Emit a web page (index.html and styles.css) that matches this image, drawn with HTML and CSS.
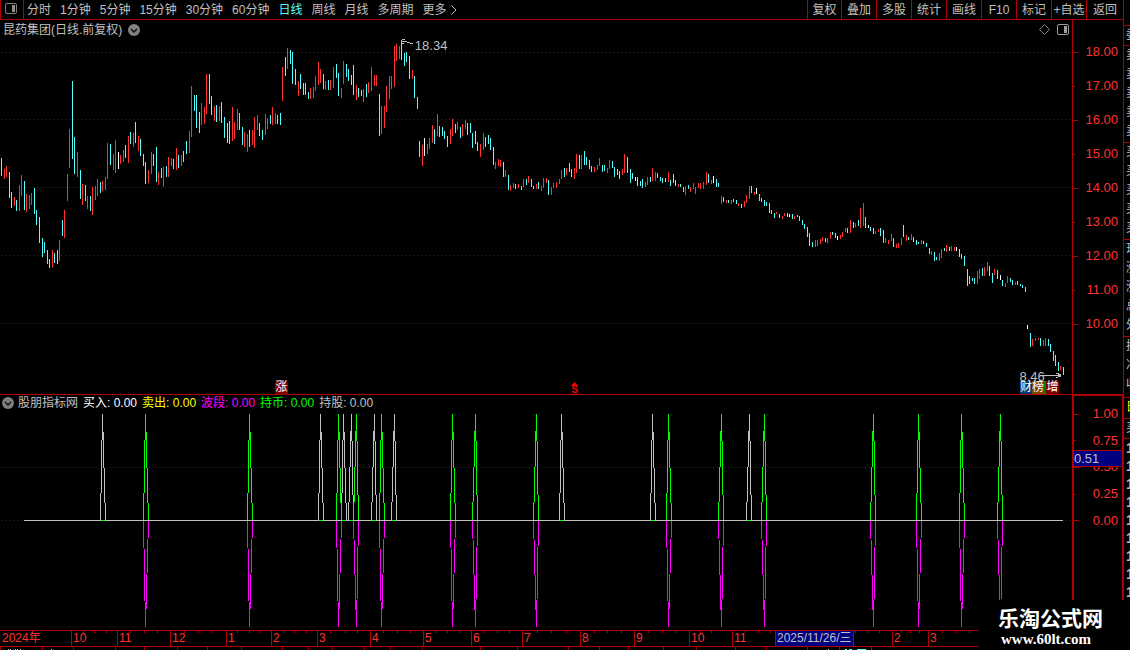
FILE: index.html
```html
<!DOCTYPE html>
<html lang="zh-CN">
<head>
<meta charset="utf-8">
<title>昆药集团 日线</title>
<link rel="stylesheet" href="styles.css">
</head>
<body>
<div class="terminal">
  <main class="main">
    <nav class="toolbar">
      <button class="panel-toggle" aria-label="侧栏"><svg class="icon" width="12" height="11" viewBox="0 0 12 11"><rect x=".5" y=".5" width="11" height="10" rx="1.5" fill="none" stroke="#808080"/><path d="M7 2h3v7H7z" fill="#909090"/></svg></button>
      <div class="periods">
        <button>分时</button><button>1分钟</button><button>5分钟</button><button>15分钟</button><button>30分钟</button><button>60分钟</button><button class="active">日线</button><button>周线</button><button>月线</button><button>多周期</button><button class="more">更多<svg width="6" height="10" viewBox="0 0 6 10"><path d="M.5 .5L5 5L.5 9.500" fill="none" stroke="#c0c0c0"/></svg></button>
      </div>
      <div class="tools">
        <button>复权</button><button>叠加</button><button>多股</button><button>统计</button><button>画线</button><button>F10</button><button>标记</button><button>+自选</button><button>返回</button>
      </div>
    </nav>

    <section class="pane price">
      <div class="plot">
        <header class="title">
          <h1>昆药集团(日线.前复权)</h1>
          <button class="drop" aria-label="展开"><svg width="12" height="12" viewBox="0 0 12 12"><circle cx="6" cy="6" r="6" fill="#808080"/><path d="M3 5l3 3l3-3" fill="none" stroke="#111" stroke-width="1.500"/></svg></button>
          <div class="title-tools">
            <svg width="11" height="11" viewBox="0 0 11 11"><path d="M5.500 .5L10.500 5.500L5.500 10.500L.5 5.500z" fill="none" stroke="#808080"/></svg>
            <svg width="12" height="11" viewBox="0 0 12 11"><rect x=".5" y=".5" width="11" height="10" rx="1.500" fill="none" stroke="#a0a0a0"/><path d="M7 2h3v7H7z" fill="#a0a0a0"/></svg>
          </div>
        </header>
        <svg class="chart" viewBox="0 38 1072 356" preserveAspectRatio="none">
          <path class="grid bright" d="M1 52.500H1072"/>
          <path class="grid" d="M1 119.500H1072M1 187.500H1072M1 255.500H1072M1 323.500H1072"/>
          <g transform="translate(.5 0)">
          <path class="down" d="M1 158V176M9 172V198M11 192V208M16 200V211M24 181V210M34 188V214M36 210V225M39 217V243M42 238V257M44 242V253M47 250V264M49 259V268M54 253V263M57 250V264M62 220V236M72 81V159M74 137V174M80 170V199M85 185V201M90 196V211M100 182V193M110 144V165M125 145V158M130 132V144M135 122V143M140 139V156M143 154V166M145 162V184M153 154V166M156 147V182M161 168V178M166 166V177M173 159V169M178 155V168M183 151V162M186 141V154M194 95V111M196 95V128M199 112V133M209 74V104M211 96V115M216 105V122M221 102V123M224 117V138M227 123V143M229 121V144M239 113V130M242 127V145M249 130V147M259 123V136M262 130V140M270 115V124M277 115V124M280 113V125M285 57V76M290 50V64M292 52V84M295 69V85M300 74V89M303 83V95M305 83V95M308 92V99M323 74V89M328 80V90M336 64V78M338 73V96M346 64V77M348 69V81M351 75V85M353 65V95M358 88V97M361 90V96M366 84V97M379 94V136M401 41V60M404 53V66M406 52V62M409 56V79M414 76V98M417 97V109M419 141V157M434 129V144M439 126V137M442 127V136M444 131V139M447 136V147M455 124V133M460 127V138M467 123V135M470 123V133M472 133V148M475 131V144M477 142V151M485 137V147M488 135V144M490 138V150M493 147V165M503 162V177M508 175V190M515 184V189M521 186V190M526 179V185M531 179V187M533 186V189M538 182V189M548 180V195M564 168V177M569 163V172M571 169V177M579 155V169M584 151V165M586 157V165M589 160V169M591 166V172M602 165V172M604 165V171M612 161V168M614 167V177M617 169V175M619 171V179M627 157V173M630 169V183M632 173V179M637 177V186M640 181V186M642 179V188M650 177V182M657 173V178M660 177V181M662 178V183M665 178V182M670 180V186M673 174V183M675 180V186M680 184V187M683 187V192M688 185V189M708 174V183M716 179V187M718 183V187M723 197V202M728 200V203M733 199V202M736 200V204M741 204V208M751 186V193M759 194V201M761 198V202M764 200V206M766 202V206M769 203V213M771 210V214M774 213V218M779 214V218M787 213V217M792 214V219M797 215V217M799 216V221M802 220V225M804 224V229M807 227V237M809 233V246M812 242V247M825 238V242M832 232V235M835 233V238M847 228V233M853 222V228M858 220V226M865 217V228M870 227V231M873 228V234M880 228V236M883 230V243M893 238V247M903 225V237M908 237V240M913 237V242M916 240V245M918 242V244M923 241V244M926 243V247M929 248V254M934 252V261M936 257V260M944 248V251M949 247V251M959 249V257M961 254V259M964 256V266M967 269V286M969 276V284M972 278V281M974 278V284M982 268V276M989 266V276M992 273V283M997 270V279M1002 280V286M1010 278V282M1012 280V285M1017 281V285M1020 284V286M1022 285V288M1025 287V292M1030 333V347M1040 338V346M1048 339V346M1050 344V352M1053 351V361M1055 355V366M1058 362V371M1063 367V375"/>
          <path class="up" d="M4 169V179M6 166V177M14 197V206M19 185V211M21 175V196M26 194V212M29 195V209M31 193V205M52 250V267M59 240V261M64 210V238M67 174V201M69 129V168M77 152V177M82 184V205M87 196V209M92 187V215M95 186V200M97 179V196M102 181V191M105 177V190M107 143V179M113 154V170M115 140V173M120 155V164M123 150V162M128 136V163M133 133V147M138 136V151M148 170V183M151 152V174M158 172V185M163 167V187M168 157V177M171 158V166M176 148V170M181 155V166M189 131V153M191 86V137M201 103V125M204 107V124M206 74V114M214 106V121M219 106V121M232 107V141M234 122V139M237 109V130M244 132V147M247 134V152M252 130V145M254 117V148M257 115V130M265 114V135M267 118V129M272 107V125M275 113V124M282 67V101M287 48V69M298 81V96M310 88V99M313 87V98M315 76V91M318 62V85M320 69V83M325 81V90M330 80V90M333 67V88M341 88V98M343 61V84M356 85V100M363 89V102M368 82V93M371 67V91M374 75V86M376 75V86M381 106V134M384 106V128M386 86V112M389 76V99M391 76V89M394 46V87M396 44V61M399 46V59M412 70V79M422 145V166M427 144V154M429 138V149M432 125V143M437 114V136M450 129V144M452 119V136M457 122V130M462 124V136M465 120V129M480 144V157M483 133V150M495 162V169M498 159V166M500 160V167M505 170V177M510 185V191M513 183V188M518 184V188M523 179V187M528 176V183M536 184V189M541 186V191M543 178V188M546 178V183M551 187V195M553 183V188M556 182V188M559 179V184M561 170V179M566 168V175M574 168V179M576 154V173M581 155V169M594 167V172M597 165V170M599 158V166M607 168V173M609 160V169M622 169V175M624 154V173M645 182V187M647 177V185M652 168V181M655 172V181M668 172V182M678 184V187M685 186V195M690 187V192M693 183V189M695 187V194M698 183V188M700 183V189M703 182V189M706 172V185M711 180V184M721 196V204M726 200V203M731 200V204M738 203V206M744 201V207M746 195V203M749 186V199M754 192V195M776 212V214M782 216V219M784 213V216M794 216V219M815 240V247M817 240V246M820 239V244M822 237V241M827 238V243M830 232V239M840 235V239M842 232V237M845 228V232M850 220V233M855 223V227M860 208V228M863 203V226M875 231V234M878 229V232M885 238V243M888 240V244M891 234V241M896 244V248M898 243V248M901 238V245M906 235V241M911 234V240M921 240V244M931 251V255M939 253V261M941 249V258M946 245V252M951 246V251M954 247V251M977 271V284M979 269V279M984 267V276M987 262V271M994 269V275M1005 283V287M1007 276V283M1015 282V285M1032 339V346M1035 338V341M1038 338V340M1043 340V346M1045 338V346M1060 366V370"/>
          <path class="flat" d="M118 152V169M424 138V156M635 177V181M713 176V183M756 188V194M789 214V217M837 236V240M868 225V228M956 247V251M1000 275V280M1027 325V329"/>
          </g>
          <path class="pointer" d="M401.500 44V40.500H402M402 39.500H405M401 41.500H405M405 41.500H407M407 42.500H410M410 43.500H413M402 43.500H404M1040 375.500H1061M1056 373.500H1059M1058 374.500H1061M1058 376.500H1061M1056 377.500H1058"/>
        </svg>
        <span class="mark high">18.34</span>
        <span class="mark low">8.46</span>
        <span class="badge rise">涨</span>
        <span class="dividend"><svg width="7" height="4" viewBox="0 0 7 4"><path d="M3.500 0L7 4H0z" fill="#f00"/></svg><u>S</u></span>
        <div class="badges"><span class="badge blue">财</span><span class="badge brown">榜</span><span class="badge red">增</span></div>
      </div>
      <ol class="axis price-axis">
        <li>18.00</li><li>17.00</li><li>16.00</li><li>15.00</li><li>14.00</li><li>13.00</li><li>12.00</li><li>11.00</li><li>10.00</li>
      </ol>
    </section>

    <section class="pane indicator">
      <div class="plot">
        <header class="legend">
          <button class="drop" aria-label="展开"><svg width="12" height="12" viewBox="0 0 12 12"><circle cx="6" cy="6" r="6" fill="#808080"/><path d="M3 5l3 3l3-3" fill="none" stroke="#111" stroke-width="1.500"/></svg></button>
          <span>股朋指标网</span><span class="buy">买入: 0.00</span><span class="sell">卖出: 0.00</span><span class="band">波段: 0.00</span><span class="cash">持币: 0.00</span><span>持股: 0.00</span>
        </header>
        <svg class="chart" viewBox="0 414 1072 216" preserveAspectRatio="none">
          <path class="grid" d="M1 467.500H1072M1 520.500H1072"/>
          <g transform="translate(.5 0)">
          <path class="hold" d="M100 520L102 414L105 520M318 520L320 414L323 520M341 520L343 414L346 520M348 520L351 414L353 520M371 520L374 414L376 520M391 520L394 414L396 520M559 520L561 414L564 520M650 520L652 414L655 520M746 520L749 414L751 520"/>
          <path class="long" d="M143 520L145 414L148 520M247 520L249 414L252 520M336 520L338 414L341 520M353 520L356 414L358 520M379 520L381 414L384 520M450 520L452 414L455 520M472 520L475 414L477 520M533 520L536 414L538 520M666 520L668 414L671 520M718 520L721 414L723 520M761 520L764 414L766 520M870 520L873 414L875 520M916 520L918 414L921 520M959 520L961 414L964 520M997 520L1000 414L1002 520"/>
          <path class="wave" d="M143 521L145 627L148 521M247 521L249 627L252 521M336 521L338 627L341 521M353 521L356 627L358 521M379 521L381 627L384 521M450 521L452 627L455 521M472 521L475 627L477 521M533 521L536 627L538 521M666 521L668 627L671 521M718 521L721 627L723 521M761 521L764 627L766 521M870 521L873 627L875 521M916 521L918 627L921 521M959 521L961 627L964 521M997 521L1000 627L1002 521"/>
          </g>
          <path class="hold" d="M24 520.500H1063"/>
          <path class="long" d="M101 520.500h4M319 520.500h4M342 520.500h4M349 520.500h4M372 520.500h4M392 520.500h4M560 520.500h4M651 520.500h4M747 520.500h4"/>
        </svg>
      </div>
      <div class="axis-box">
        <ol class="axis value-axis">
          <li>1.00</li><li>0.75</li><li>0.50</li><li>0.25</li><li>0.00</li>
        </ol>
        <output class="cursor-value">0.51</output>
      </div>
    </section>

    <footer class="dates">
      <svg class="ticks" viewBox="0 0 1123 15" preserveAspectRatio="none"><path d="M83.500 0v2M94.500 0v2M106.500 0v2M130.500 0v2M144.500 0v2M157.500 0v2M184.500 0v2M198.500 0v2M212.500 0v2M237.500 0v2M249.500 0v2M260.500 0v2M283.500 0v2M294.500 0v2M306.500 0v2M330.500 0v2M345.500 0v2M357.500 0v2M383.500 0v2M397.500 0v2M410.500 0v2M435.500 0v2M447.500 0v2M459.500 0v2M484.500 0v2M497.500 0v2M509.500 0v2M537.500 0v2M551.500 0v2M566.500 0v2M594.500 0v2M607.500 0v2M621.500 0v2M648.500 0v2M662.500 0v2M675.500 0v2M700.500 0v2M711.500 0v2M745.500 0v2M758.500 0v2M770.500 0v2M855.500 0v2M867.500 0v2M879.500 0v2M901.500 0v2M910.500 0v2M919.500 0v2M942.500 0v2M956.500 0v2M969.500 0v2"/></svg>
      <ol class="months">
        <li>2024年</li><li>10</li><li>11</li><li>12</li><li>1</li><li>2</li><li>3</li><li>4</li><li>5</li><li>6</li><li>7</li><li>8</li><li>9</li><li>10</li><li>11</li><li class="current">2025/11/26/三</li><li></li><li>2</li><li>3</li>
      </ol>
    </footer>
    <svg class="strip" viewBox="0 0 1123 3" preserveAspectRatio="none"><path d="M.5 0v3M42.500 0v3M73.500 0v3M115.500 0v3M144.500 0v3M177.500 0v3M207.500 0v3M241.500 0v3M282.500 0v3M308.500 0v3M332.500 0v3M364.500 0v3M390.500 0v3M422.500 0v3M480.500 0v3M517.500 0v3M568.500 0v3M599.500 0v3M628.500 0v3M663.500 0v3M696.500 0v3M735.500 0v3M766.500 0v3M807.500 0v3M839.500 0v3M871.500 0v3" stroke="#b00000"/><path d="M8 2.500h1M10 2.500h1M15 2.500h1M17 2.500h1M20 2.500h1M51 2.500h1M828 2.500h1" stroke="#c0c0c0"/><path d="M845 2.500h2M849 2.500h3M857 2.500h9" stroke="#54ffff"/></svg>
  </main>

  <aside class="side">
    <div class="group blank"></div>
    <div class="group ratio">委</div>
    <div class="group five"><span>卖</span><span>卖</span><span>卖</span><span>卖</span><span>卖</span></div>
    <div class="group five"><span>买</span><span>买</span><span>买</span><span>买</span><span>买</span></div>
    <div class="group five"><span>现</span><span>涨</span><span>涨</span><span>总</span><span>外</span></div>
    <div class="group three"><span>换</span><span>净</span><span>收</span></div>
    <div class="group tab">日</div>
    <div class="group ratio">买</div>
    <div class="group deals"><b>1</b><b>1</b><b>1</b><b>1</b><b>1</b><b>1</b><b>1</b><b>1</b><b>1</b></div>
  </aside>
  <div class="watermark"><strong>乐淘公式网</strong><a href="#">www.60lt.com</a></div>
</div>
</body>
</html>
```
FILE: styles.css
```css
* { box-sizing: border-box; }

:root {
  --line: #b00000;
  --text: #c0c0c0;
  --up: #ff3232;
  --down: #54ffff;
}

body {
  margin: 0;
  background: #000;
  color: var(--text);
  font: 12px/16px "Liberation Sans", "Noto Sans CJK SC", sans-serif;
}

button {
  padding: 0;
  border: 0;
  background: none;
  color: inherit;
  font: inherit;
  white-space: nowrap;
}

svg { display: block; }
ol { margin: 0; padding: 0; list-style: none; }

.terminal {
  position: relative;
  display: grid;
  grid-template-columns: minmax(0, 1fr) 7px;
  height: 100vh;
  overflow: hidden;
}

.main {
  display: grid;
  grid-template-rows: 20px minmax(0, 375fr) minmax(0, 235fr) 17px 3px;
  min-width: 0;
}

/* toolbar */
.toolbar {
  display: flex;
  border-bottom: 1px solid var(--line);
}
.panel-toggle {
  display: flex;
  width: 24px;
  padding: 3px 0 0 4px;
  border: solid var(--line);
  border-width: 0 1px;
}
.periods {
  display: flex;
  gap: 9px;
  padding-left: 3px;
}
.periods .active { color: var(--down); }
.more { display: flex; align-items: center; gap: 4px; }
.tools {
  display: grid;
  grid-template-columns: 34px repeat(7, 35px) 37px;
  margin-left: auto;
}
.tools button { border-left: 1px solid var(--line); }

/* panes */
.pane {
  display: grid;
  grid-template-columns: minmax(0, 1fr) 51px;
  min-height: 0;
}
.price { border-bottom: 1px solid var(--line); }
.plot {
  position: relative;
  display: flex;
  flex-direction: column;
  min-height: 0;
}
.title {
  display: flex;
  align-items: center;
  height: 18px;
  padding: 1px 3px 0;
  gap: 6px;
}
.title h1 { margin: 0; font-size: 12px; font-weight: 400; }
.title-tools {
  display: flex;
  gap: 7px;
  margin-left: auto;
}
.legend {
  display: flex;
  align-items: center;
  gap: 5px;
  height: 19px;
  padding: 0 2px 3px;
}
.legend .drop { margin-right: -1px; }
.buy { color: #fff; }
.sell { color: #ff0; }
.band { color: #f0f; }
.cash { color: #0f0; }

.chart {
  flex: 1;
  width: 100%;
  min-height: 0;
}
.chart path {
  fill: none;
  shape-rendering: crispEdges;
}
.grid { stroke: #900000; stroke-dasharray: 1 3; }
.grid.bright { stroke: #b00000; }
.up { stroke: var(--up); }
.down { stroke: var(--down); }
.flat { stroke: #fff; }
.pointer, .hold { stroke: var(--text); }
.long { stroke: #0f0; }
.wave { stroke: #f0f; }

/* labels pinned on the price chart */
.mark, .badges, .rise, .dividend { position: absolute; }
.mark { font-size: 13px; }
.high { left: 38.7%; top: 18px; }
.low { left: 95.1%; bottom: 9px; }
.badge {
  width: 13px;
  height: 13px;
  color: #fff;
  line-height: 13px;
  text-align: center;
}
.rise { left: 25.65%; bottom: 0; background: #800000; border-top-right-radius: 3px; }
.badges { display: flex; left: 95.15%; bottom: 0; }
.blue { width: 12px; background: #003c78; }
.brown { border-right: 1px solid #008000; background: #804000; }
.red { width: 14px; border-left: 1px solid #008000; background: #800000; }
.dividend {
  left: 53.3%;
  bottom: 0;
  color: #f00;
  font-size: 10px;
  font-weight: 700;
  line-height: 8px;
}

/* value axes */
.axis {
  display: flex;
  flex-direction: column;
  border-left: 1px solid var(--line);
  color: var(--up);
  font-size: 13px;
}
.axis li {
  display: flex;
  flex: 1;
  align-items: center;
  justify-content: space-between;
  min-height: 0;
}
.axis li::before {
  content: "";
  width: 5px;
  height: 1px;
  background: var(--line);
}
.axis li:nth-child(even)::before { width: 2px; }
.price-axis { padding: 15px 5px 53px 0; }
.axis-box { position: relative; display: grid; border: solid var(--line); border-width: 1px 1px 0 0; }
.value-axis { border-left-width: 2px; padding: 5px 4px 96px 0; }
.cursor-value {
  position: absolute;
  top: 54px;
  left: 2px;
  right: 0;
  border: solid var(--line);
  border-width: 1px 0;
  background: #000080;
  font-size: 13px;
  line-height: 15px;
}

/* date axis */
.dates {
  position: relative;
  border: solid var(--line);
  border-width: 1px 0;
  color: var(--up);
}
.ticks { position: absolute; width: 100%; height: 100%; stroke: var(--line); }
.months {
  display: grid;
  grid-template-columns: 71fr 46fr 53fr 56fr 45fr 46fr 53fr 53fr 48fr 51fr 58fr 54fr 55fr 43fr 43fr 78fr 39fr 36fr 195fr;
  line-height: 15px;
}
.months li { padding-left: 1px; border-left: 1px solid var(--line); white-space: nowrap; }
.months li:first-child { padding-left: 2px; border: 0; }
.months .current { background: #000080; color: var(--text); }
.strip { width: 100%; height: 3px; }

/* quote column */
.side {
  display: flex;
  flex-direction: column;
  overflow: hidden;
  border-left: 1px solid var(--line);
}
.group {
  display: flex;
  flex-direction: column;
  flex: none;
  padding-left: 2px;
  border-bottom: 1px solid var(--line);
  line-height: 19px;
}
.blank { height: 26px; }
.ratio { height: 20px; }
.five { height: 97px; }
.three { height: 61px; }
.tab { height: 21px; color: #ff0; }
.deals { border: 0; line-height: 18px; font-size: 14px; }

.watermark {
  position: absolute;
  right: 0;
  bottom: 0;
  display: flex;
  flex-direction: column;
  width: 152px;
  height: 50px;
  padding: 8px 0 0 20px;
  background: #000;
  color: #fff;
}
.watermark strong { font-size: 21px; line-height: 22px; }
.watermark a {
  padding-left: 3px;
  color: #fff;
  font: 700 15px/18px "Liberation Serif", serif;
  text-decoration: none;
}
```
